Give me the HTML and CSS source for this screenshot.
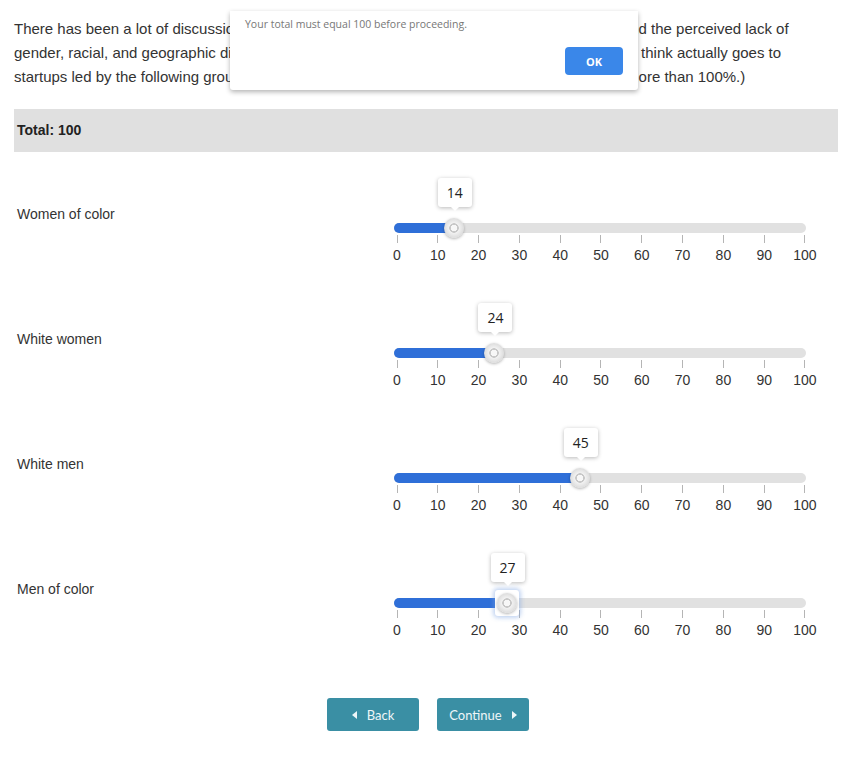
FILE: index.html
```html
<!DOCTYPE html>
<html lang="en">
<head>
    <meta charset="UTF-8">
    <title>Funding Survey</title>
    <link rel="stylesheet" href="styles.css">
</head>
<body>
    <div class="survey">
        <p class="question">There has been a lot of discussion in the press about venture capital investment in startups and the perceived lack of gender, racial, and geographic diversity amongst founders. What percentage of money do you think actually goes to startups led by the following groups? (Please note that your responses should not add up to more than 100%.)</p>

        <div class="total-bar">Total: 100</div>

        <div class="slider-list">
            <div class="slider-row">
                <div class="row-label">Women of color</div>
                <div class="slider">
                    <div class="track">
                        <div class="rail">
                            <div class="fill" style="width: calc(3px + 14%)"></div>
                            <div class="handle" style="left: 14%">
                                <div class="tip">14</div>
                                <div class="thumb"></div>
                            </div>
                        </div>
                    </div>
                    <div class="scale"></div>
                </div>
            </div>

            <div class="slider-row">
                <div class="row-label">White women</div>
                <div class="slider">
                    <div class="track">
                        <div class="rail">
                            <div class="fill" style="width: calc(3px + 24%)"></div>
                            <div class="handle" style="left: 24%">
                                <div class="tip">24</div>
                                <div class="thumb"></div>
                            </div>
                        </div>
                    </div>
                    <div class="scale"></div>
                </div>
            </div>

            <div class="slider-row">
                <div class="row-label">White men</div>
                <div class="slider">
                    <div class="track">
                        <div class="rail">
                            <div class="fill" style="width: calc(3px + 45%)"></div>
                            <div class="handle" style="left: 45%">
                                <div class="tip">45</div>
                                <div class="thumb"></div>
                            </div>
                        </div>
                    </div>
                    <div class="scale"></div>
                </div>
            </div>

            <div class="slider-row">
                <div class="row-label">Men of color</div>
                <div class="slider">
                    <div class="track">
                        <div class="rail">
                            <div class="fill" style="width: calc(3px + 27%)"></div>
                            <div class="handle focused" style="left: 27%">
                                <div class="tip">27</div>
                                <div class="thumb"></div>
                            </div>
                        </div>
                    </div>
                    <div class="scale"></div>
                </div>
            </div>
        </div>

        <div class="nav-buttons">
            <button class="nav-btn"><span class="arrow left"></span>Back</button>
            <button class="nav-btn">Continue<span class="arrow right"></span></button>
        </div>
    </div>

    <div class="alert-box">
        <div class="alert-text">Your total must equal 100 before proceeding.</div>
        <div class="alert-actions">
            <button class="alert-ok">OK</button>
        </div>
    </div>

    <script>
        // Build the tick marks under each slider
        document.querySelectorAll('.scale').forEach(function(scale) {
            for (let i = 0; i <= 100; i += 10) {
                const tick = document.createElement('div');
                tick.className = 'tick';
                tick.innerHTML = '<span class="tick-line"></span><span class="tick-num">' + i + '</span>';
                scale.appendChild(tick);
            }
        });
    </script>
</body>
</html>
```

FILE: styles.css
```css
body {
    margin: 0;
    font-family: "Liberation Sans", Arial, sans-serif;
    color: #333;
    background: #fff;
}

.survey {
    width: 824px;
    margin-left: 14px;
}

.question {
    margin: 17px 0 20px;
    font-size: 15px;
    line-height: 24px;
    color: #333;
}

.total-bar {
    background: #e0e0e0;
    height: 43px;
    line-height: 43px;
    padding-left: 3px;
    font-size: 14px;
    font-weight: bold;
    color: #222;
}

.slider-list {
    margin-top: 26px;
}

.slider-row {
    display: grid;
    grid-template-columns: 380px 412px;
    height: 125px;
}

.row-label {
    padding: 26px 0 0 3px;
    font-size: 14px;
    line-height: 20px;
}

.slider {
    padding-top: 45px;
}

.track {
    position: relative;
    height: 10px;
    background: #e1e1e1;
    border-radius: 5px;
}

.rail {
    position: absolute;
    top: 0;
    bottom: 0;
    left: 3px;
    right: 3px;
}

.fill {
    position: absolute;
    left: -3px;
    top: 0;
    height: 100%;
    background: #2f6fd8;
    border-radius: 5px 0 0 5px;
}

.handle {
    position: absolute;
    top: 5px;
    width: 0;
    height: 0;
}

.thumb {
    position: absolute;
    left: -10px;
    top: -10px;
    width: 20px;
    height: 20px;
    border-radius: 50%;
    background: radial-gradient(circle, #f7f7f7 0 3px, #c8c8c8 3px 4.5px, #f2f2f2 5px, #dcdcdc 10px);
    box-shadow: 0 1px 3px rgba(0, 0, 0, 0.3);
}

.handle.focused::before {
    content: "";
    position: absolute;
    left: -12px;
    top: -13px;
    width: 24px;
    height: 26px;
    border-radius: 3px;
    background: #fff;
    box-shadow: 0 0 4px 2px rgba(120, 160, 225, 0.45);
}

.tip {
    position: absolute;
    left: -16px;
    top: -50px;
    width: 34px;
    height: 29px;
    line-height: 29px;
    text-align: center;
    font-family: "Open Sans", sans-serif;
    font-size: 14px;
    color: #222;
    background: #fff;
    border-radius: 3px;
    box-shadow: 0 1px 4px rgba(0, 0, 0, 0.28);
}

.tip::after {
    content: "";
    position: absolute;
    left: 13px;
    bottom: -4px;
    border-left: 4px solid transparent;
    border-right: 4px solid transparent;
    border-top: 4px solid #fff;
}

.scale {
    display: flex;
    justify-content: space-between;
    width: 408px;
    margin-left: 3px;
    margin-top: 2px;
}

.tick {
    width: 0;
    display: flex;
    flex-direction: column;
    align-items: center;
}

.tick-line {
    width: 1px;
    height: 8px;
    background: #b5b5b5;
}

.tick-num {
    margin-top: 4px;
    font-size: 14px;
    line-height: 16px;
    color: #333;
}

.nav-buttons {
    display: flex;
    justify-content: center;
    gap: 18px;
    margin-top: 20px;
    padding-left: 4px;
}

.nav-btn {
    display: flex;
    align-items: center;
    justify-content: center;
    gap: 10px;
    width: 92px;
    height: 33px;
    padding: 0;
    background: #3a8fa4;
    border: none;
    border-radius: 3px;
    color: #eef6f8;
    font-family: Lato, sans-serif;
    font-size: 13px;
    cursor: pointer;
}

.arrow {
    width: 0;
    height: 0;
    border-top: 4px solid transparent;
    border-bottom: 4px solid transparent;
}

.arrow.left {
    border-right: 5px solid #eef6f8;
}

.arrow.right {
    border-left: 5px solid #eef6f8;
}

.alert-box {
    position: absolute;
    left: 230px;
    top: 11px;
    width: 408px;
    height: 79px;
    box-sizing: border-box;
    padding: 6px 15px 0;
    background: #fff;
    border-radius: 0 0 3px 3px;
    box-shadow: 0 2px 5px rgba(0, 0, 0, 0.3);
}

.alert-text {
    font-family: "Open Sans", sans-serif;
    font-size: 10.5px;
    color: #777;
    line-height: 14px;
}

.alert-actions {
    display: flex;
    justify-content: flex-end;
    margin-top: 16px;
}

.alert-ok {
    width: 58px;
    height: 28px;
    background: #3a87e9;
    border: none;
    border-radius: 4px;
    color: #fff;
    font-family: "Open Sans", sans-serif;
    font-size: 11px;
    font-weight: bold;
}
```
